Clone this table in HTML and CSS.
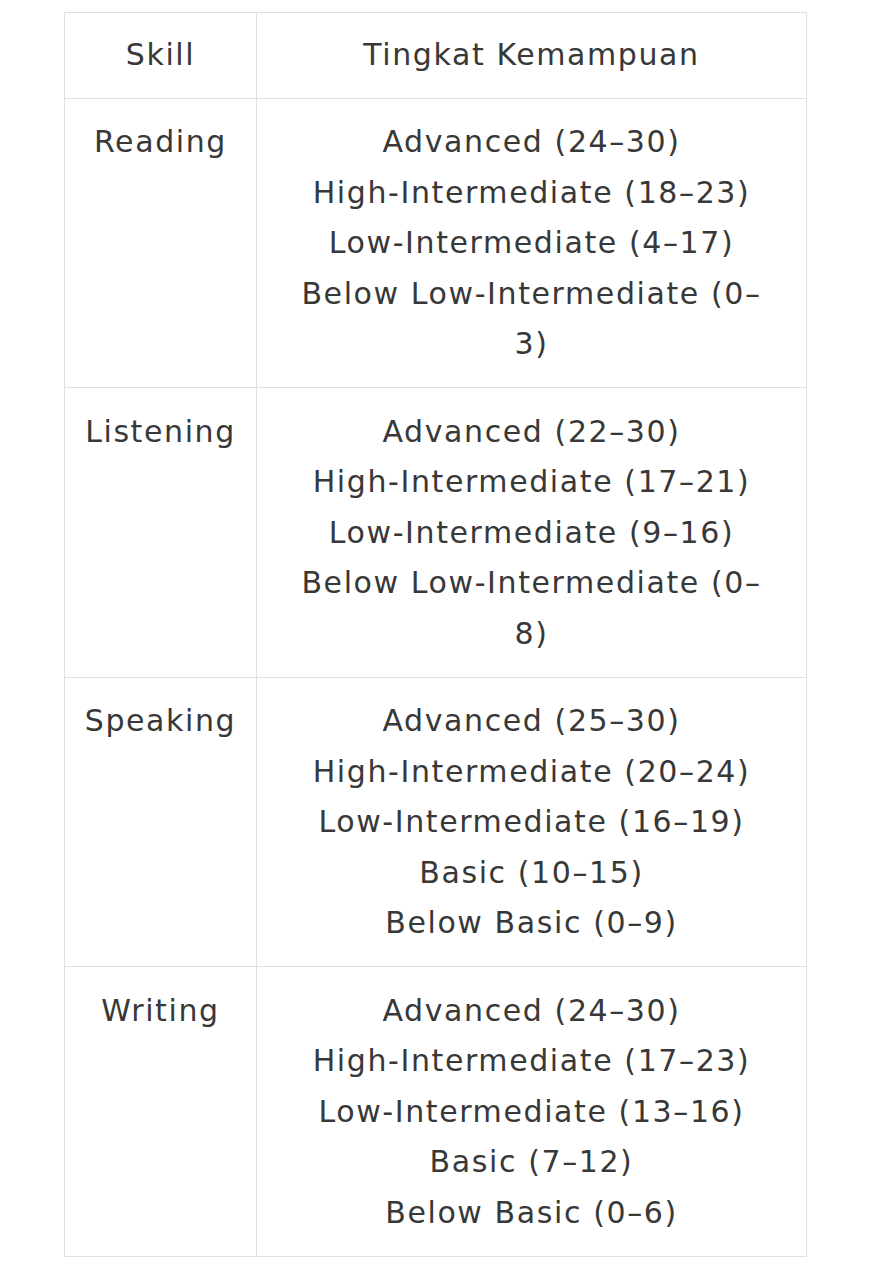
FILE: index.html
```html
<!DOCTYPE html>
<html>
<head>
<meta charset="utf-8">
<link rel="stylesheet" href="styles.css">
</head>
<body>
<div class="wrap">
<table class="levels">
  <thead>
    <tr><th class="skill">Skill</th><th class="level">Tingkat Kemampuan</th></tr>
  </thead>
  <tbody>
    <tr><td class="skill">Reading</td><td class="level">Advanced (24–30)<br>High-Intermediate (18–23)<br>Low-Intermediate (4–17)<br>Below Low-Intermediate (0–3)</td></tr>
    <tr><td class="skill">Listening</td><td class="level">Advanced (22–30)<br>High-Intermediate (17–21)<br>Low-Intermediate (9–16)<br>Below Low-Intermediate (0–8)</td></tr>
    <tr><td class="skill">Speaking</td><td class="level">Advanced (25–30)<br>High-Intermediate (20–24)<br>Low-Intermediate (16–19)<br>Basic (10–15)<br>Below Basic (0–9)</td></tr>
    <tr><td class="skill">Writing</td><td class="level">Advanced (24–30)<br>High-Intermediate (17–23)<br>Low-Intermediate (13–16)<br>Basic (7–12)<br>Below Basic (0–6)</td></tr>
  </tbody>
</table>
</div>
</body>
</html>
```

FILE: styles.css
```css
html, body { margin: 0; padding: 0; background: #ffffff; }
.wrap { padding: 12px 0 0 64px; }
.levels {
  border-collapse: collapse;
  width: 743px;
  font-family: "DejaVu Sans", "Liberation Sans", sans-serif;
  font-size: 30px;
  line-height: 50.5px;
  color: #383838;
  letter-spacing: 1.6px;
}
.levels th, .levels td {
  border: 1px solid #e0e0e0;
  padding: 17px 18px;
  text-align: center;
  vertical-align: top;
  font-weight: 400;
}
.levels td { padding-top: 18.5px; padding-bottom: 17.5px; }
.levels .skill { width: 155px; }
.levels td.level { padding-left: 31px; padding-right: 31px; }
```
